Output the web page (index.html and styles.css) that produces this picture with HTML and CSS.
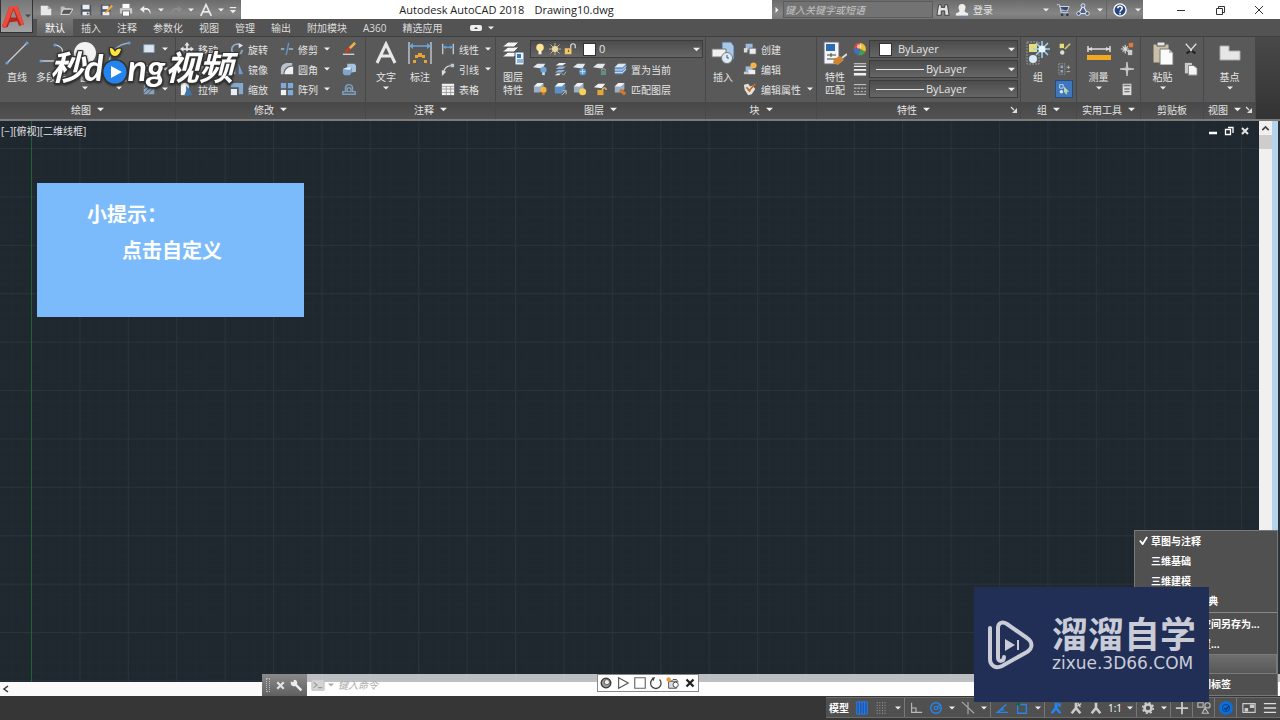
FILE: index.html
```html
<!DOCTYPE html>
<html lang="zh-CN">
<head>
  <meta charset="UTF-8" />
  <meta name="viewport" content="width=device-width, initial-scale=1.0"/>
  <title>Autodesk AutoCAD 2018 - Drawing10.dwg</title>
  <link rel="stylesheet" href="styles.css">
</head>
<body>

  <!-- icon sprite -->
  <svg class="sprite" aria-hidden="true">
    <symbol id="down" viewBox="0 0 8 8"><path d="M0 2h8L4 6z" fill="#eee"/></symbol>
    <symbol id="corner" viewBox="0 0 8 8"><path d="M1 1l3 3" stroke="#ddd" stroke-width="1.2"/><path d="M7 2v5H2z" fill="#ddd"/></symbol>
    <symbol id="new" viewBox="0 0 16 16"><path d="M2 3h8l4 4v7H2z" fill="#e8e8e8"/><path d="M10 3v4h4" fill="#aaa"/></symbol>
    <symbol id="open" viewBox="0 0 16 16"><path d="M2 13V4h4l1 2h6v2H5z" fill="#bbb"/><path d="M2 13l3-6h11l-4 6z" fill="#555" stroke="#eee"/></symbol>
    <symbol id="save" viewBox="0 0 16 16"><path d="M2 2h12v12H2z" fill="#4a5666"/><path d="M4 2h8v5H4zM4 10h8v4H4z" fill="#eee"/><path d="M9 11h2v2H9z" fill="#444"/></symbol>
    <symbol id="saveas" viewBox="0 0 16 16"><path d="M2 2h11v12H2z" fill="#4a5666"/><path d="M4 3h7v4H4zM4 10h8v4H4z" fill="#eee"/><path d="M14 2l2 2-7 7-2 1 1-3z" fill="#f0a63a"/></symbol>
    <symbol id="print" viewBox="0 0 16 16"><path d="M4 1h8v5H4z" fill="#fff"/><path d="M1 6h14v6H1z" fill="#ccc"/><path d="M4 9h8v6H4z" fill="#fff" stroke="#666"/></symbol>
    <symbol id="undo" viewBox="0 0 16 16"><path d="M6 3L1 7l5 4V8c4-1 6 1 7 5 1-5-2-8-7-7z" fill="#eee"/></symbol>
    <symbol id="redo" viewBox="0 0 16 16"><path d="M10 3l5 4-5 4V8C6 7 4 9 3 13 2 8 5 5 10 6z" fill="#8d8d8d"/></symbol>
    <symbol id="lettera" viewBox="0 0 24 24"><path d="M3 22L12 3l9 19M6 15h12" fill="none" stroke="#e8e8e8" stroke-width="3"/></symbol>
    <symbol id="more" viewBox="0 0 10 10"><path d="M1 2h8" stroke="#eee" stroke-width="1.5"/><path d="M1 5h8L5 9z" fill="#eee"/></symbol>
    <symbol id="binoculars" viewBox="0 0 16 16"><path d="M3 2h3v3h4V2h3l2 12h-5V9H6v5H1z" fill="#e4e4e4" stroke="#333"/></symbol>
    <symbol id="person" viewBox="0 0 16 16"><circle cx="8" cy="5" r="4" fill="#eee"/><path d="M5 8h6v2l4 2v3H1v-3l4-2z" fill="#eee"/><path d="M1 15h14" stroke="#4a6a92"/></symbol>
    <symbol id="cart" viewBox="0 0 16 16"><path d="M1 2h3l2 9h8M4 4h11l-2 5H5" fill="#34486c" stroke="#dfe6f2"/><circle cx="7" cy="13.500" r="1.500" fill="#26385a"/><circle cx="13" cy="13.500" r="1.500" fill="#26385a"/></symbol>
    <symbol id="a360" viewBox="0 0 16 16"><path d="M8 3L3 12h10z" fill="#4b6288" stroke="#e8edf5" stroke-width="1.300"/><circle cx="8" cy="3" r="2.200" fill="#5f7ba6" stroke="#e8edf5"/><circle cx="3" cy="12" r="2.200" fill="#3f5884" stroke="#e8edf5"/><circle cx="13" cy="12" r="2.200" fill="#3f5884" stroke="#e8edf5"/></symbol>
    <symbol id="help" viewBox="0 0 16 16"><circle cx="8" cy="8" r="7" fill="#26467e" stroke="#fff" stroke-width="1.500"/><path d="M5.500 6c0-3 5-3 5 0 0 2-2.500 2-2.500 4M8 11v2" fill="none" stroke="#fff" stroke-width="1.700"/></symbol>
    <symbol id="line" viewBox="0 0 24 24"><path d="M2 22L22 2" stroke="#c9ced3" stroke-width="1.300"/><circle cx="2" cy="22" r="1.600" fill="#62a0dc"/><circle cx="22" cy="2" r="1.600" fill="#62a0dc"/></symbol>
    <symbol id="polyline" viewBox="0 0 24 24"><path d="M2 20h14a8 8 0 0 0 0-16" fill="none" stroke="#c9ced3" stroke-width="1.300"/><circle cx="2" cy="20" r="1.600" fill="#62a0dc"/><circle cx="16" cy="4" r="1.600" fill="#62a0dc"/></symbol>
    <symbol id="circle" viewBox="0 0 24 24"><circle cx="12" cy="12" r="11" fill="#f2f2f2"/></symbol>
    <symbol id="arc" viewBox="0 0 24 24"><path d="M2 22C3 11 11 3 22 2" fill="none" stroke="#8fb2d6" stroke-width="1.500"/><circle cx="2" cy="22" r="1.600" fill="#62a0dc"/><circle cx="9" cy="8" r="1.600" fill="#62a0dc"/><circle cx="22" cy="2" r="1.600" fill="#62a0dc"/></symbol>
    <symbol id="rect" viewBox="0 0 16 16"><path d="M2 3h12v9H2z" fill="#dfe3ea" stroke="#6f9cc9"/></symbol>
    <symbol id="ellipse" viewBox="0 0 16 16"><ellipse cx="8" cy="8" rx="6" ry="4" fill="none" stroke="#ddd"/></symbol>
    <symbol id="hatch" viewBox="0 0 16 16"><path d="M2 3h12v11H2z" fill="#8aa3c0"/><path d="M2 8l5-5M2 13L12 3M6 14l8-8" stroke="#455"/></symbol>
    <symbol id="move" viewBox="0 0 16 16"><path d="M8 0l3 4H9v3h3V5l4 3-4 3V9H9v3h2l-3 4-3-4h2V9H4v2L0 8l4-3v2h3V4H5z" fill="#dfe3e8"/></symbol>
    <symbol id="rotate" viewBox="0 0 16 16"><path d="M12 4a6 6 0 1 0 2 5" fill="none" stroke="#8faac8" stroke-width="2"/><path d="M10 1l5 3-5 3z" fill="#dde"/></symbol>
    <symbol id="trim" viewBox="0 0 16 16"><path d="M10 1L7 15" stroke="#5f93c7" stroke-width="1.700"/><path d="M1 8h4M10 8h5" stroke="#9fb6cd" stroke-width="1.500"/></symbol>
    <symbol id="pencil" viewBox="0 0 16 16"><path d="M15 1L8 8" stroke="#f3b14a" stroke-width="3"/><path d="M9 7l-5 5" stroke="#b8432d" stroke-width="4"/><path d="M1 14h13" stroke="#eee" stroke-width="1.300"/></symbol>
    <symbol id="copy" viewBox="0 0 16 16"><circle cx="6" cy="6" r="4" fill="#ddd"/><circle cx="11" cy="11" r="4" fill="#8aaed2"/></symbol>
    <symbol id="mirror" viewBox="0 0 16 16"><path d="M6 2v12H1z" fill="#dce5ef"/><path d="M10 2v12h5z" fill="#6f9cc9"/></symbol>
    <symbol id="fillet" viewBox="0 0 16 16"><path d="M1 14V9c0-5 3-8 8-8h5v3C8 4 4 8 4 14z" fill="#b9c2cc"/><path d="M5 14c0-5 4-9 10-9v9z" fill="#f0f0f0"/></symbol>
    <symbol id="solid" viewBox="0 0 16 16"><path d="M1 8l5-2h5v6l-2 3H3l-2-2z" fill="#7fa5cf"/><path d="M6 2h8l2 2v7l-5 1V6H6z" fill="#a5c4e4"/><path d="M1 8l5-2h5l-2 3z" fill="#dbe8f6"/></symbol>
    <symbol id="stretch" viewBox="0 0 16 16"><path d="M1 1h9v14H1z" fill="#f4f4f4"/><path d="M7 4l5 6 2 5H5l2-5z" fill="#3c76af"/></symbol>
    <symbol id="scale" viewBox="0 0 16 16"><path d="M1 1h14v13h-5V6H1z" fill="#83a9d0"/><path d="M1 8h7v7H1z" fill="#e9eef4"/></symbol>
    <symbol id="array" viewBox="0 0 16 16"><path d="M1 1h6v6H1zM9 1h6v6H9zM9 9h6v6H9z" fill="#7fa9d6"/><path d="M1 9h6v6H1z" fill="#f2f2f2"/></symbol>
    <symbol id="offset" viewBox="0 0 16 16"><path d="M1 14v-3h3V7a4 4 0 0 1 8 0v4h3v3zM6 11V8c0-2 4-2 4 0v3z" fill="none" stroke="#7f9fc0" stroke-width="1.700"/></symbol>
    <symbol id="dim" viewBox="0 0 24 24"><path d="M1 1v22M23 1v22" stroke="#cfd2d6" stroke-width="1.300"/><path d="M2 5h20" stroke="#6ba3db" stroke-width="1.500"/><path d="M1 5l4-3v6zM23 5l-4-3v6z" fill="#6ba3db"/><path d="M7 14h3v3H7zM14 14h3v3h-3zM5 19h3v3H5zM16 19h3v3h-3zM10 12h4v4h-4z" fill="#e9a52d"/></symbol>
    <symbol id="linear" viewBox="0 0 16 16"><path d="M2 2v12M14 2v12" stroke="#ddd" stroke-width="1.300"/><path d="M2 6h12" stroke="#62a0dc" stroke-width="1.500"/><path d="M2 6l4-2v4zM14 6l-4-2v4z" fill="#62a0dc"/></symbol>
    <symbol id="leader" viewBox="0 0 16 16"><path d="M2 14c2-6 3-9 9-10" fill="none" stroke="#ddd" stroke-width="1.400"/><path d="M1 9l5 2-5 5z" fill="#ddd"/><path d="M11 2h4v4h-4z" fill="#b6c6d8"/></symbol>
    <symbol id="table" viewBox="0 0 16 16"><path d="M1 2h14v13H1z" fill="#f2f2f2"/><path d="M1 5h14M1 8h14M1 12h14M6 5v10M11 5v10" stroke="#999"/></symbol>
    <symbol id="layers" viewBox="0 0 24 24"><g fill="#f4f4f4" stroke="#555"><path d="M1 16l6-5h11l-5 5z"/><path d="M1 11l6-5h11l-5 5z"/><path d="M1 6l6-5h11l-5 5z"/></g><path d="M14 11h9v13h-9z" fill="#eef3f8" stroke="#456"/><path d="M16 13h4v4h-4z" fill="#3777bd"/><path d="M16 19h6M16 21h6" stroke="#3777bd"/></symbol>
    <symbol id="bulb" viewBox="0 0 16 16"><circle cx="8" cy="6" r="5" fill="#ffe394"/><path d="M6 10h4v5H6z" fill="#fff5d1"/></symbol>
    <symbol id="sun" viewBox="0 0 16 16"><circle cx="8" cy="8" r="4" fill="#f4dda5"/><path d="M8 0v16M0 8h16M2 2l12 12M14 2L2 14" stroke="#e6d2a2" stroke-width="1"/></symbol>
    <symbol id="unlock" viewBox="0 0 16 16"><path d="M1 7h9v8H1z" fill="#f0c469"/><path d="M9 7V4a3 3 0 0 1 6 0v3" fill="none" stroke="#ddd" stroke-width="1.600"/><path d="M6 9v3" stroke="#664" stroke-width="1.500"/></symbol>
    <symbol id="laysheet" viewBox="0 0 16 16"><path d="M0 6l5-4h9l-3 5H8z" fill="#e3e8ee"/></symbol>
    <symbol id="layoff" viewBox="0 0 16 16"><use href="#laysheet"/><circle cx="12" cy="9" r="3.500" fill="#6ba7de"/><path d="M10.500 12h3v3h-3z" fill="#cfe0f0"/></symbol>
    <symbol id="layiso" viewBox="0 0 16 16"><path d="M3 4l4-3h8l-4 3z" fill="#eef1f5"/><path d="M3 8l4-3h8l-4 3zM2 12l4-3h8l-4 3z" fill="#8db3da"/><path d="M2 15l3-2h4l-2 2z" fill="#eef1f5"/><path d="M10 13l2 2 3-4" fill="none" stroke="#bbb"/></symbol>
    <symbol id="layfrz" viewBox="0 0 16 16"><use href="#laysheet"/><circle cx="11" cy="11" r="4" fill="#5d9ad4"/><path d="M11 8v6M8 11h6" stroke="#cfe4f7"/></symbol>
    <symbol id="laylock" viewBox="0 0 16 16"><use href="#laysheet"/><path d="M9 10h6v5H9z" fill="#5f8f86"/><path d="M10 10V8h4v2" fill="none" stroke="#aaa"/></symbol>
    <symbol id="laycur" viewBox="0 0 16 16"><path d="M2 6l4-4h9v7l-4 5H2z" fill="#6b98c8"/><path d="M2 6l4-4h9l-4 4z" fill="#dbe6f1"/><path d="M2 9h9l4-4M2 12h9l4-4" fill="none" stroke="#d7e3f0"/></symbol>
    <symbol id="layon" viewBox="0 0 16 16"><path d="M1 5l4-4h7v7l-4 4H1z" fill="#9aaec4"/><path d="M1 5l4-4h7L8 5z" fill="#f2f2f2"/><circle cx="12" cy="9" r="3.500" fill="#f6b23c"/><path d="M10.500 12h3v3h-3z" fill="#c67a28"/></symbol>
    <symbol id="layuniso" viewBox="0 0 16 16"><path d="M2 5l4-4h8v7l-4 5H2z" fill="#5b8fc5"/><path d="M2 5l4-4h8l-4 4z" fill="#f2f2f2"/><path d="M10 15l5-5M15 14v-4h-4" fill="none" stroke="#ccc"/></symbol>
    <symbol id="laythaw" viewBox="0 0 16 16"><path d="M1 5l4-4h7v7l-4 4H1z" fill="#9aaec4"/><path d="M1 5l4-4h7L8 5z" fill="#f2f2f2"/><circle cx="11" cy="11" r="4" fill="#f5d05a"/></symbol>
    <symbol id="layunlock" viewBox="0 0 16 16"><path d="M1 6l5-4h8l-4 5z" fill="#f2f2f2"/><path d="M5 9h7v6H5z" fill="#e2a53a"/><path d="M11 9c0-3 4-3 4 0" fill="none" stroke="#eac06c" stroke-width="1.500"/></symbol>
    <symbol id="laymatch" viewBox="0 0 16 16"><path d="M2 5l4-4h7v7l-4 4H2z" fill="#9aaec4"/><path d="M2 5l4-4h7L9 5z" fill="#f2f2f2"/><path d="M8 9l6 5" stroke="#cc7a33" stroke-width="4"/></symbol>
    <symbol id="insert" viewBox="0 0 24 24"><path d="M11 1h9l3 4v13H11z" fill="#a9c7e6" stroke="#4c6d91"/><path d="M1 8h14v8H1z" fill="#f0f0f0" stroke="#777"/><circle cx="16" cy="17" r="5.500" fill="#dcebf8" stroke="#777"/><path d="M16 14v3h2" stroke="#555" fill="none"/></symbol>
    <symbol id="create" viewBox="0 0 16 16"><path d="M3 2h8v7H3z" fill="#9bb9d8"/><path d="M1 7h4v5H1z" fill="#ddd"/><path d="M7 7h8v7H7z" fill="#eee" stroke="#667"/></symbol>
    <symbol id="edit" viewBox="0 0 16 16"><path d="M3 5h8v6H3z" fill="#9bb9d8"/><path d="M6 9h8v5H6z" fill="#eee"/><circle cx="12" cy="4" r="3.500" fill="#f2b34b"/><path d="M1 11h5v3H1z" fill="#ccc"/></symbol>
    <symbol id="attr" viewBox="0 0 16 16"><path d="M1 3l5-1 2 3 3-1 3 4-4 6-4 1-4-6z" fill="#e5e0da"/><path d="M4 6l4 5M14 2l-7 8" stroke="#bb6b2c" stroke-width="2"/></symbol>
    <symbol id="match" viewBox="0 0 24 24"><path d="M1 1h15v22H1z" fill="#f4f4f4" stroke="#668"/><path d="M3 3h9v7H3z" fill="#2e6ab0"/><path d="M4 14h9M4 18h9M8 12v4" stroke="#444"/><path d="M24 13l-5 4" stroke="#ddd" stroke-width="2"/><path d="M11 18l6-3 4 4-6 5-5-2z" fill="#cf8430"/></symbol>
    <symbol id="wheel" viewBox="0 0 16 16"><path d="M8 8V1a7 7 0 0 1 6 10z" fill="#f0c232"/><path d="M8 8l6 3a7 7 0 0 1-8 4z" fill="#4c9a50"/><path d="M8 8l-2 7A7 7 0 0 1 1 7z" fill="#3b72c8"/><path d="M8 8L1 7a7 7 0 0 1 7-6z" fill="#d94c3c"/><circle cx="7" cy="5" r="2.500" fill="#fff" opacity=".6"/></symbol>
    <symbol id="weights" viewBox="0 0 16 16"><path d="M1 2h14" stroke="#eee"/><path d="M1 5h14" stroke="#eee" stroke-width="1.500"/><path d="M1 9h14" stroke="#eee" stroke-width="2"/><path d="M1 14h14" stroke="#eee" stroke-width="3"/></symbol>
    <symbol id="types" viewBox="0 0 16 16"><path d="M1 3h14" stroke="#ddd"/><path d="M1 7h14" stroke="#ddd" stroke-dasharray="3 1"/><path d="M1 11h14" stroke="#ddd" stroke-dasharray="2 2"/><path d="M1 14h14" stroke="#ddd"/></symbol>
    <symbol id="group" viewBox="0 0 24 24"><path d="M1 1h12v22H1z" fill="none" stroke="#999" stroke-dasharray="2 1"/><path d="M3 3h8v8H3z" fill="#e3dd7c"/><circle cx="7" cy="18" r="4" fill="#d9eaf5"/><path d="M16 0v17M7 8h17M10 2l12 12M22 2L10 14" stroke="#9fd3f7" stroke-width="1.500"/><circle cx="16" cy="8" r="3.500" fill="#e5f6ff"/></symbol>
    <symbol id="grpedit" viewBox="0 0 16 16"><path d="M3 2h5v5H3z" fill="#e3dd7c"/><circle cx="6" cy="12" r="2.500" fill="#ddd"/><path d="M15 2L9 8" stroke="#d5c56a" stroke-width="2"/></symbol>
    <symbol id="ungroup" viewBox="0 0 16 16"><path d="M2 2h7v12H2z" fill="none" stroke="#999" stroke-dasharray="2 1"/><path d="M4 4h3v3H4zM4 9h3v3H4z" fill="#8aa3c0"/><path d="M11 6h4M13 4v4M11 11h4" stroke="#bbb"/></symbol>
    <symbol id="grpsel" viewBox="0 0 16 16"><path d="M3 3h4v4H3z" fill="none" stroke="#cfe0f5"/><circle cx="5" cy="11" r="2" fill="#dbe7ef"/><path d="M8 5l6 6-3 0 1 3-2 0-1-3-1 2z" fill="#b9d8ae"/></symbol>
    <symbol id="measure" viewBox="0 0 24 24"><path d="M1 5v6M23 5v6M1 8h22" stroke="#ddd" stroke-width="1.500"/><path d="M1 8l4-2v4zM23 8l-4-2v4z" fill="#ddd"/><path d="M0 14h24v5H0z" fill="#f2a922"/></symbol>
    <symbol id="qselect" viewBox="0 0 16 16"><path d="M6 3v10M1 8h9M3 5l6 6M9 5l-6 6" stroke="#ddd" stroke-width="1.300"/><path d="M10 1h5v5h-5z" fill="#e5793a"/><path d="M9 9h5v6H9z" fill="#ccc"/></symbol>
    <symbol id="point" viewBox="0 0 16 16"><path d="M8 0l1 7 7 1-7 1-1 7-1-7-7-1 7-1z" fill="#ccc" stroke="#ccc"/></symbol>
    <symbol id="calc" viewBox="0 0 16 16"><path d="M3 2h10v13H3z" fill="#ddd"/><path d="M4 4h8M5 8h6M5 11h6" stroke="#777" stroke-width="1.500"/></symbol>
    <symbol id="paste" viewBox="0 0 24 24"><path d="M2 3h16v19H2z" fill="#c8bfa8" stroke="#5d584e"/><path d="M6 1h8v4H6z" fill="#e8e8e8" stroke="#555"/><path d="M9 8h9l4 4v12H9z" fill="#fafafa" stroke="#777"/><path d="M18 8v4h4" fill="#bbb"/></symbol>
    <symbol id="cut" viewBox="0 0 16 16"><path d="M2 2l8 9M14 2L6 11" stroke="#ddd" stroke-width="1.500"/><path d="M3 13l4-3M13 13L9 10" stroke="#222" stroke-width="2.500"/></symbol>
    <symbol id="clip" viewBox="0 0 16 16"><path d="M1 1h8v12H1z" fill="#ccc"/><path d="M5 4h6l4 3v8H5z" fill="#f5f5f5" stroke="#777"/></symbol>
    <symbol id="base" viewBox="0 0 24 24"><path d="M2 5h9v5h11v9H2z" fill="#e6e6e6" stroke="#aaa"/></symbol>
    <symbol id="minimize" viewBox="0 0 12 12"><path d="M2 6.500h8" stroke="currentColor"/></symbol>
    <symbol id="restore" viewBox="0 0 12 12"><path d="M2.500 4.500h6v6h-6zM4.500 4V2.500h6v6H9" fill="none" stroke="currentColor"/></symbol>
    <symbol id="close" viewBox="0 0 12 12"><path d="M2 2l8 8M10 2l-8 8" stroke="currentColor"/></symbol>
    <symbol id="vpmin" viewBox="0 0 12 12"><path d="M2 8h8" stroke="#fff" stroke-width="2.500"/></symbol>
    <symbol id="vprestore" viewBox="0 0 12 12"><path d="M2.500 4.500h5v5h-5zM5 2.500h5V8" fill="none" stroke="#fff" stroke-width="1.300"/></symbol>
    <symbol id="boldclose" viewBox="0 0 12 12"><path d="M3 3l6 6M9 3l-6 6" stroke="currentColor" stroke-width="2"/></symbol>
    <symbol id="wrench" viewBox="0 0 16 16"><path d="M6 6l8 8" stroke="#eee" stroke-width="3"/><path d="M1 3l3 1 1-3a4 4 0 1 1-4 5z" fill="#eee"/></symbol>
    <symbol id="prompt" viewBox="0 0 16 16"><path d="M1 2h14v12H1z" fill="#d5d5d5" stroke="#bbb"/><path d="M3 5l4 3-4 3M8 11h5" fill="none" stroke="#999" stroke-width="1.300"/></symbol>
    <symbol id="ball" viewBox="0 0 16 16"><circle cx="8" cy="8" r="5.500" fill="#999" stroke="#333" stroke-width="1.500"/><circle cx="9" cy="7" r="3" fill="#eee" stroke="#555"/></symbol>
    <symbol id="play" viewBox="0 0 16 16"><path d="M3 2l11 6-11 6z" fill="none" stroke="#555" stroke-width="1.300"/></symbol>
    <symbol id="stop" viewBox="0 0 16 16"><path d="M2 2h12v12H2z" fill="#fff" stroke="#666" stroke-width="1.300"/></symbol>
    <symbol id="loop" viewBox="0 0 16 16"><path d="M5 3a6 6 0 1 0 7 1" fill="none" stroke="#444" stroke-width="1.500"/><path d="M7 1L3 2l2 4" fill="#444"/></symbol>
    <symbol id="camera" viewBox="0 0 16 16"><path d="M3 6h9v8H3z" fill="#ddd" stroke="#444"/><circle cx="11" cy="10" r="3" fill="#fff" stroke="#333"/><circle cx="3" cy="4" r="2.500" fill="#f29a3a"/><path d="M6 6l2-2h4l2 3" fill="none" stroke="#444"/></symbol>
    <symbol id="sgrid" viewBox="0 0 16 16"><path d="M2 1h12v14H2zM5 1v14M8 1v14M11 1v14" fill="#1d5ab0" stroke="#2f7fe6"/></symbol>
    <symbol id="sdots" viewBox="0 0 16 16"><path d="M2 2h12M2 5h12M2 8h12M2 11h12M2 14h12" stroke="#bbb" stroke-dasharray="1 2"/></symbol>
    <symbol id="ortho" viewBox="0 0 16 16"><path d="M3 2v11h12M3 8h5v5" fill="none" stroke="#bbb" stroke-width="1.300"/></symbol>
    <symbol id="polar" viewBox="0 0 16 16"><circle cx="8" cy="8" r="6" fill="none" stroke="#2386f3" stroke-width="1.600"/><circle cx="8" cy="8" r="2" fill="none" stroke="#2386f3" stroke-width="1.300"/><path d="M9 7l4-3M9 8h5" stroke="#2386f3" stroke-width="1.300"/></symbol>
    <symbol id="iso" viewBox="0 0 16 16"><path d="M1 1l14 13M8 1v14" stroke="#aaa" stroke-width="1.300"/></symbol>
    <symbol id="angle" viewBox="0 0 16 16"><path d="M13 4L3 13h12M6 10h4" fill="none" stroke="#2386f3" stroke-width="1.700"/></symbol>
    <symbol id="osnap" viewBox="0 0 16 16"><path d="M3 4h10v10H3z" fill="none" stroke="#2386f3" stroke-width="1.500"/><path d="M2 2h4v3H2z" fill="#0c6244"/></symbol>
    <symbol id="anno" viewBox="0 0 16 16"><path d="M8 2v6M8 8l-5 6M8 8l5 6" stroke="currentColor" stroke-width="3"/></symbol>
    <symbol id="annoplus" viewBox="0 0 16 16"><path d="M8 2v6M8 8l-5 6M8 8l5 6" stroke="currentColor" stroke-width="3"/><path d="M9 6l5-3M10 2l3 5" stroke="currentColor" stroke-width="1.500"/></symbol>
    <symbol id="gear" viewBox="0 0 16 16"><circle cx="8" cy="8" r="4" fill="none" stroke="#ccc" stroke-width="3"/><circle cx="8" cy="8" r="6" fill="none" stroke="#ccc" stroke-width="2" stroke-dasharray="2.400 2.300"/></symbol>
    <symbol id="plus" viewBox="0 0 16 16"><path d="M8 1v14M1 8h14" stroke="#ccc" stroke-width="2"/></symbol>
    <symbol id="shapes" viewBox="0 0 16 16"><path d="M1 2h6v5H1zM6 14l3-6 4 6z" fill="none" stroke="#bbb" stroke-width="1.300"/><circle cx="12" cy="5" r="3" fill="none" stroke="#bbb" stroke-width="1.300"/></symbol>
    <symbol id="hw" viewBox="0 0 16 16"><circle cx="8" cy="8" r="8" fill="#0c6ed6"/><circle cx="8" cy="8" r="4" fill="none" stroke="#094b97" stroke-width="1.300"/><path d="M6 8l2 2 3-4" fill="none" stroke="#08397a" stroke-width="1.500"/></symbol>
    <symbol id="clean" viewBox="0 0 16 16"><path d="M1 3h14v10H1z" fill="none" stroke="#ccc" stroke-width="1.300"/><path d="M9 4h5v4H9zM3 8h4v4H3z" fill="#ccc"/></symbol>
    <symbol id="menu" viewBox="0 0 16 16"><path d="M1 3h14M1 8h14M1 13h14" stroke="#ddd" stroke-width="1.700"/></symbol>
  </svg>

  <div class="app">
    <div class="top">
      <button class="app-button" aria-label="应用程序菜单">
        <svg class="app-logo" viewBox="0 0 24 24"><path d="M0 22L8 1h8l7 19-5 2-2-5-8 1-2 5-4 1z" fill="#b9241c"/><path d="M8 1h8l7 19-3 1L12 3 5 21l-2 3-3-2z" fill="#ea4d3e"/><path d="M9 13l3-8 3 8z" fill="#8d8d8d"/></svg>
        <svg class="arrow dark"><use href="#down"/></svg>
      </button>

      <div class="titlebar">
        <div class="quick-access">
          <button aria-label="新建"><svg><use href="#new"/></svg></button>
          <button aria-label="打开"><svg><use href="#open"/></svg></button>
          <button aria-label="保存"><svg><use href="#save"/></svg></button>
          <button aria-label="另存为"><svg><use href="#saveas"/></svg></button>
          <button aria-label="打印"><svg><use href="#print"/></svg></button>
          <button aria-label="放弃"><svg><use href="#undo"/></svg></button>
          <button class="slim" aria-label="放弃列表"><svg class="arrow"><use href="#down"/></svg></button>
          <button aria-label="重做"><svg><use href="#redo"/></svg></button>
          <button class="slim" aria-label="重做列表"><svg class="arrow"><use href="#down"/></svg></button>
          <button aria-label="文字"><svg><use href="#lettera"/></svg></button>
          <button class="slim" aria-label="文字列表"><svg class="arrow"><use href="#down"/></svg></button>
          <button class="slim" aria-label="自定义快速访问工具栏"><svg class="tiny"><use href="#more"/></svg></button>
        </div>
        <h1 class="title"><span>Autodesk AutoCAD 2018</span><span>Drawing10.dwg</span></h1>
        <div class="infocenter">
          <button class="slim" aria-label="展开"><svg class="arrow right"><use href="#down"/></svg></button>
          <input class="search" type="text" placeholder="键入关键字或短语" aria-label="搜索">
          <button aria-label="查找"><svg><use href="#binoculars"/></svg></button>
          <button class="sign-in"><svg><use href="#person"/></svg><span>登录</span><svg class="arrow"><use href="#down"/></svg></button>
          <button aria-label="应用商店"><svg><use href="#cart"/></svg></button>
          <button aria-label="A360"><svg><use href="#a360"/></svg></button>
          <button class="slim divided" aria-label="A360 列表"><svg class="arrow"><use href="#down"/></svg></button>
          <button class="help" aria-label="帮助"><svg><use href="#help"/></svg></button>
          <button class="slim" aria-label="帮助列表"><svg class="arrow"><use href="#down"/></svg></button>
        </div>
        <div class="window-buttons">
          <button aria-label="最小化"><svg><use href="#minimize"/></svg></button>
          <button aria-label="还原"><svg><use href="#restore"/></svg></button>
          <button aria-label="关闭"><svg><use href="#close"/></svg></button>
        </div>
      </div>

      <nav class="tabs">
        <button class="active">默认</button>
        <button>插入</button>
        <button>注释</button>
        <button>参数化</button>
        <button>视图</button>
        <button>管理</button>
        <button>输出</button>
        <button>附加模块</button>
        <button>A360</button>
        <button>精选应用</button>
        <button class="tab-toggle" aria-label="最小化功能区"><svg viewBox="0 0 12 8"><rect y="1" width="12" height="6" rx="2" fill="#eee"/><path d="M4 5h4L6 3z" fill="#444"/></svg><svg class="arrow"><use href="#down"/></svg></button>
      </nav>
    </div>

    <div class="ribbon">
      <section class="panel draw">
        <div class="panel-body">
          <button class="big"><svg><use href="#line"/></svg><span>直线</span></button>
          <button class="big"><svg><use href="#polyline"/></svg><span>多段线</span></button>
          <button class="big"><svg><use href="#circle"/></svg><span>圆</span><svg class="arrow"><use href="#down"/></svg></button>
          <button class="big"><svg><use href="#arc"/></svg><span>圆弧</span><svg class="arrow"><use href="#down"/></svg></button>
          <div class="small-grid">
            <button class="small" aria-label="矩形"><svg><use href="#rect"/></svg><svg class="arrow"><use href="#down"/></svg></button>
            <button class="small" aria-label="椭圆"><svg><use href="#ellipse"/></svg><svg class="arrow"><use href="#down"/></svg></button>
            <button class="small" aria-label="图案填充"><svg><use href="#hatch"/></svg><svg class="arrow"><use href="#down"/></svg></button>
          </div>
        </div>
        <h2>绘图 <svg class="arrow"><use href="#down"/></svg></h2>
      </section>

      <section class="panel modify">
        <div class="panel-body">
          <div class="small-grid">
            <button class="small"><svg><use href="#move"/></svg>移动</button>
            <button class="small"><svg><use href="#rotate"/></svg>旋转</button>
            <button class="small"><svg><use href="#trim"/></svg>修剪<svg class="arrow"><use href="#down"/></svg></button>
            <button class="small" aria-label="删除"><svg><use href="#pencil"/></svg></button>
            <button class="small"><svg><use href="#copy"/></svg>复制</button>
            <button class="small"><svg><use href="#mirror"/></svg>镜像</button>
            <button class="small"><svg><use href="#fillet"/></svg>圆角<svg class="arrow"><use href="#down"/></svg></button>
            <button class="small" aria-label="分解"><svg><use href="#solid"/></svg></button>
            <button class="small"><svg><use href="#stretch"/></svg>拉伸</button>
            <button class="small"><svg><use href="#scale"/></svg>缩放</button>
            <button class="small"><svg><use href="#array"/></svg>阵列<svg class="arrow"><use href="#down"/></svg></button>
            <button class="small" aria-label="偏移"><svg><use href="#offset"/></svg></button>
          </div>
        </div>
        <h2>修改 <svg class="arrow"><use href="#down"/></svg></h2>
      </section>

      <section class="panel annotate">
        <div class="panel-body">
          <button class="big"><svg><use href="#lettera"/></svg><span>文字</span><svg class="arrow"><use href="#down"/></svg></button>
          <button class="big"><svg><use href="#dim"/></svg><span>标注</span></button>
          <div class="small-grid">
            <button class="small"><svg><use href="#linear"/></svg>线性<svg class="arrow"><use href="#down"/></svg></button>
            <button class="small"><svg><use href="#leader"/></svg>引线<svg class="arrow"><use href="#down"/></svg></button>
            <button class="small"><svg><use href="#table"/></svg>表格</button>
          </div>
        </div>
        <h2>注释 <svg class="arrow"><use href="#down"/></svg></h2>
      </section>

      <section class="panel layer">
        <div class="panel-body">
          <button class="big"><svg><use href="#layers"/></svg><span>图层<br>特性</span></button>
          <div class="rows">
            <div class="combo">
              <svg><use href="#bulb"/></svg><svg><use href="#sun"/></svg><svg><use href="#unlock"/></svg><span class="swatch"></span>
              <select aria-label="图层"><option>0</option></select>
              <svg class="arrow"><use href="#down"/></svg>
            </div>
            <div class="tool-row">
              <button aria-label="关"><svg><use href="#layoff"/></svg></button>
              <button aria-label="隔离"><svg><use href="#layiso"/></svg></button>
              <button aria-label="冻结"><svg><use href="#layfrz"/></svg></button>
              <button aria-label="锁定"><svg><use href="#laylock"/></svg></button>
              <button class="small"><svg><use href="#laycur"/></svg>置为当前</button>
            </div>
            <div class="tool-row">
              <button aria-label="打开所有图层"><svg><use href="#layon"/></svg></button>
              <button aria-label="取消隔离"><svg><use href="#layuniso"/></svg></button>
              <button aria-label="解冻所有图层"><svg><use href="#laythaw"/></svg></button>
              <button aria-label="解锁"><svg><use href="#layunlock"/></svg></button>
              <button class="small"><svg><use href="#laymatch"/></svg>匹配图层</button>
            </div>
          </div>
        </div>
        <h2>图层 <svg class="arrow"><use href="#down"/></svg></h2>
      </section>

      <section class="panel block">
        <div class="panel-body">
          <button class="big"><svg><use href="#insert"/></svg><span>插入</span></button>
          <div class="small-grid">
            <button class="small"><svg><use href="#create"/></svg>创建</button>
            <button class="small"><svg><use href="#edit"/></svg>编辑</button>
            <button class="small"><svg><use href="#attr"/></svg>编辑属性<svg class="arrow"><use href="#down"/></svg></button>
          </div>
        </div>
        <h2>块 <svg class="arrow"><use href="#down"/></svg></h2>
      </section>

      <section class="panel properties">
        <div class="panel-body">
          <button class="big"><svg><use href="#match"/></svg><span>特性<br>匹配</span></button>
          <div class="rows">
            <div class="prop"><svg><use href="#wheel"/></svg><div class="combo"><span class="swatch"></span><select aria-label="颜色"><option>ByLayer</option></select><svg class="arrow"><use href="#down"/></svg></div></div>
            <div class="prop"><svg><use href="#weights"/></svg><div class="combo"><span class="stroke"></span><select aria-label="线宽"><option>ByLayer</option></select><svg class="arrow"><use href="#down"/></svg></div></div>
            <div class="prop"><svg><use href="#types"/></svg><div class="combo"><span class="stroke"></span><select aria-label="线型"><option>ByLayer</option></select><svg class="arrow"><use href="#down"/></svg></div></div>
          </div>
        </div>
        <h2>特性 <svg class="arrow"><use href="#down"/></svg><svg class="launcher"><use href="#corner"/></svg></h2>
      </section>

      <section class="panel group">
        <div class="panel-body">
          <button class="big"><svg><use href="#group"/></svg><span>组</span></button>
          <div class="small-grid">
            <button class="small" aria-label="组编辑"><svg><use href="#grpedit"/></svg></button>
            <button class="small" aria-label="解除编组"><svg><use href="#ungroup"/></svg></button>
            <button class="small pressed" aria-label="启用组选择"><svg><use href="#grpsel"/></svg></button>
          </div>
        </div>
        <h2>组 <svg class="arrow"><use href="#down"/></svg></h2>
      </section>

      <section class="panel utilities">
        <div class="panel-body">
          <button class="big"><svg><use href="#measure"/></svg><span>测量</span><svg class="arrow"><use href="#down"/></svg></button>
          <div class="small-grid">
            <button class="small" aria-label="快速选择"><svg><use href="#qselect"/></svg></button>
            <button class="small" aria-label="点"><svg><use href="#point"/></svg></button>
            <button class="small" aria-label="计算器"><svg><use href="#calc"/></svg></button>
          </div>
        </div>
        <h2>实用工具 <svg class="arrow"><use href="#down"/></svg></h2>
      </section>

      <section class="panel clipboard">
        <div class="panel-body">
          <button class="big"><svg><use href="#paste"/></svg><span>粘贴</span><svg class="arrow"><use href="#down"/></svg></button>
          <div class="small-grid">
            <button class="small" aria-label="剪切"><svg><use href="#cut"/></svg></button>
            <button class="small" aria-label="复制剪裁"><svg><use href="#clip"/></svg></button>
          </div>
        </div>
        <h2>剪贴板</h2>
      </section>

      <section class="panel view">
        <div class="panel-body">
          <button class="big"><svg><use href="#base"/></svg><span>基点</span><svg class="arrow"><use href="#down"/></svg></button>
        </div>
        <h2>视图 <svg class="arrow"><use href="#down"/></svg><svg class="launcher"><use href="#corner"/></svg></h2>
      </section>
    </div>

    <main class="workspace">
      <div class="canvas">
        <svg class="grid-lines" width="100%" height="100%">
          <defs>
            <pattern id="minor" width="9.700" height="9.700" patternUnits="userSpaceOnUse" x="31" y="27"><path d="M0 .5h9.700M.5 0v9.700" stroke="#212a32"/></pattern>
            <pattern id="major" width="48.400" height="48.400" patternUnits="userSpaceOnUse" x="31" y="27"><path d="M0 .5h48.400M.5 0v48.400" stroke="#29333b"/></pattern>
          </defs>
          <rect width="100%" height="100%" fill="url(#minor)"/>
          <rect width="100%" height="100%" fill="url(#major)"/>
          <path d="M31.500 0v2000" stroke="#1c6433"/>
        </svg>
        <div class="viewport-bar">
          <span>[−][俯视][二维线框]</span>
          <div class="viewport-buttons">
            <button aria-label="最小化视口"><svg><use href="#vpmin"/></svg></button>
            <button aria-label="还原视口"><svg><use href="#vprestore"/></svg></button>
            <button aria-label="关闭视口"><svg><use href="#boldclose"/></svg></button>
          </div>
        </div>

        <div class="tip">
          <p>小提示：</p>
          <p class="tip-text">点击自定义</p>
        </div>
      </div>
      <div class="vscroll">
        <svg viewBox="0 0 12 12"><path d="M3 8l3-3 3 3" fill="none" stroke="#444" stroke-width="1.500"/></svg>
        <div class="thumb"></div>
      </div>
    </main>

    <div class="hscroll">
      <svg viewBox="0 0 12 12"><path d="M8 3L4 6l4 3" fill="none" stroke="#333" stroke-width="1.500"/></svg>
      <div class="command-line">
        <div class="command-handle">
          <span class="grip"></span>
          <button aria-label="关闭命令行"><svg><use href="#boldclose"/></svg></button>
          <button aria-label="自定义命令行"><svg><use href="#wrench"/></svg></button>
        </div>
        <svg class="prompt"><use href="#prompt"/></svg><svg class="arrow"><use href="#down"/></svg>
        <input type="text" placeholder="键入命令" aria-label="命令">
      </div>
      <div class="recorder">
        <button aria-label="录制"><svg><use href="#ball"/></svg></button>
        <button aria-label="播放"><svg><use href="#play"/></svg></button>
        <button aria-label="停止"><svg><use href="#stop"/></svg></button>
        <button aria-label="重复"><svg><use href="#loop"/></svg></button>
        <button aria-label="捕捉"><svg><use href="#camera"/></svg></button>
        <button aria-label="关闭工具栏"><svg><use href="#boldclose"/></svg></button>
      </div>
    </div>

    <footer class="statusbar">
      <div class="status-tools">
        <button class="model">模型</button>
        <button aria-label="栅格"><svg><use href="#sgrid"/></svg></button>
        <button aria-label="捕捉模式"><svg><use href="#sdots"/></svg></button>
        <button class="drop" aria-label="捕捉设置"><svg class="arrow"><use href="#down"/></svg></button>
        <button class="first" aria-label="正交"><svg><use href="#ortho"/></svg></button>
        <button aria-label="极轴"><svg><use href="#polar"/></svg></button>
        <button class="drop" aria-label="极轴设置"><svg class="arrow"><use href="#down"/></svg></button>
        <button aria-label="等轴测"><svg><use href="#iso"/></svg></button>
        <button class="drop" aria-label="等轴测设置"><svg class="arrow"><use href="#down"/></svg></button>
        <button class="first" aria-label="对象捕捉追踪"><svg><use href="#angle"/></svg></button>
        <button aria-label="对象捕捉"><svg><use href="#osnap"/></svg></button>
        <button class="drop" aria-label="对象捕捉设置"><svg class="arrow"><use href="#down"/></svg></button>
        <button class="first on" aria-label="注释可见性"><svg><use href="#annoplus"/></svg></button>
        <button aria-label="自动缩放"><svg><use href="#annoplus"/></svg></button>
        <button aria-label="注释比例"><svg><use href="#anno"/></svg></button>
        <button class="ratio">1:1</button>
        <button class="drop" aria-label="比例列表"><svg class="arrow"><use href="#down"/></svg></button>
        <button class="first" aria-label="切换工作空间"><svg><use href="#gear"/></svg></button>
        <button class="drop" aria-label="工作空间列表"><svg class="arrow"><use href="#down"/></svg></button>
        <button class="first" aria-label="注释监视器"><svg><use href="#plus"/></svg></button>
        <button class="first" aria-label="隔离对象"><svg><use href="#shapes"/></svg></button>
        <button class="first" aria-label="硬件加速"><svg><use href="#hw"/></svg></button>
        <button class="first last" aria-label="全屏显示"><svg><use href="#clean"/></svg></button>
        <button aria-label="自定义"><svg><use href="#menu"/></svg></button>
      </div>
    </footer>

    <div class="workspace-menu" role="menu">
      <button role="menuitem"><svg class="check" viewBox="0 0 10 10"><path d="M1 5l3 4 5-8" fill="none" stroke="#fff" stroke-width="2"/></svg>草图与注释</button>
      <button role="menuitem">三维基础</button>
      <button role="menuitem">三维建模</button>
      <button role="menuitem">AutoCAD 经典</button>
      <hr>
      <button role="menuitem">将当前工作空间另存为...</button>
      <button role="menuitem">工作空间设置...</button>
      <button class="hover" role="menuitem">自定义...</button>
      <button role="menuitem">显示工作空间标签</button>
    </div>

    <div class="video-brand">
      <span class="cjk">秒</span><span class="latin">d</span>
      <svg viewBox="0 0 24 38"><path d="M7 0c3 0 4 2 5 4 1-2 3-4 6-3-1 4-3 7-6 7-4 0-5-4-5-8z" fill="#ffe43d"/><circle cx="12" cy="24" r="11.500" fill="#2583ee"/><path d="M8 18l11 6-11 6z" fill="#fff"/></svg>
      <span class="latin">ng</span><span class="cjk">视频</span>
    </div>

    <div class="site-brand">
      <svg viewBox="0 0 48 50"><path d="M3 8v31c0 7 6 10 12 7l25-14c6-4 6-10 0-14L20 4c-5-3-9-1-9 4v30c0 4 6 4 6-1" fill="none" stroke="#c9ccd6" stroke-width="4" stroke-linecap="round"/><path d="M18 19l10 6-10 6z" fill="#c9ccd6"/><path d="M31 20v10" stroke="#c9ccd6" stroke-width="2"/></svg>
      <div>
        <p class="site-name">溜溜自学</p>
        <p class="site-url">zixue.3D66.COM</p>
      </div>
    </div>
  </div>

</body>
</html>
```

FILE: styles.css
```css
* {
  box-sizing: border-box;
}

body {
  margin: 0;
  font-family: "Open Sans", "Noto Sans CJK SC", sans-serif;
  font-size: 10px;
  color: #e4e4e4;
  background: #363636;
}

button,
input,
select {
  font: inherit;
  color: inherit;
  background: none;
  border: 0;
  padding: 0;
  margin: 0;
  min-width: 0;
}

button {
  display: flex;
  align-items: center;
  justify-content: center;
  white-space: nowrap;
}

h1, h2, p {
  margin: 0;
}

h1, h2 {
  font-weight: normal;
}

svg {
  display: block;
  flex: none;
  width: 14px;
  height: 14px;
}

.sprite {
  position: absolute;
  width: 0;
  height: 0;
}

.arrow {
  width: 6px;
  height: 6px;
}

.arrow.right {
  transform: rotate(-90deg);
}

.arrow.dark {
  filter: brightness(0.3);
}

.tiny {
  width: 8px;
  height: 8px;
}

.app {
  position: relative;
  display: flex;
  flex-direction: column;
  height: 100vh;
  overflow: hidden;
}

/* title bar and tabs */
.top {
  display: grid;
  grid-template-columns: 33px 1fr;
  grid-template-rows: 19px 17px;
  background: #535353;
}

.app-button {
  grid-row: 1 / 3;
  margin-bottom: 3px;
  background: linear-gradient(#777, #a2a2a2);
  border: 1px solid #333;
  border-top: 0;
}

.app-logo {
  width: 23px;
  height: 25px;
}

.titlebar {
  display: flex;
  background: #fff;
}

.quick-access,
.infocenter {
  display: flex;
  align-items: stretch;
  background: linear-gradient(#6b6b6b, #858585 70%, #777);
}

.quick-access {
  width: 208px;
  padding-left: 3px;
}

.quick-access button,
.infocenter button {
  width: 20px;
}

.quick-access .slim,
.infocenter .slim {
  width: 10px;
}

.quick-access .slim:last-child {
  width: 14px;
}

.title {
  flex: 1;
  display: flex;
  justify-content: center;
  gap: 10px;
  font-size: 11px;
  line-height: 19px;
  color: #222;
}

.infocenter {
  width: 371px;
}

.search {
  width: 150px;
  margin: 1px 0 1px 1px;
  padding: 0 1px;
  background: #737373;
  border: 1px solid #5c5c5c;
  font-style: italic;
}

.search::placeholder {
  color: #c4c4c4;
  opacity: 1;
}

.infocenter .sign-in {
  flex: 1;
  justify-content: flex-start;
  gap: 4px;
  padding-left: 2px;
}

.sign-in .arrow {
  margin-left: auto;
  margin-right: 4px;
}

.infocenter .divided {
  width: 14px;
  border-right: 1px solid #666;
}

.infocenter .help {
  width: 26px;
}

.window-buttons {
  display: flex;
  width: 137px;
  padding-left: 18px;
  color: #333;
}

.window-buttons button {
  width: 39px;
}

.window-buttons svg {
  width: 12px;
  height: 12px;
}

.tabs {
  display: flex;
  padding-left: 4px;
}

.tabs button {
  padding: 0 8px;
  line-height: 16px;
  color: #ddd;
}

.tabs .active {
  background: linear-gradient(#757575, #616161);
  color: #fff;
}

.tabs .tab-toggle {
  gap: 6px;
  margin-left: 12px;
}

.tab-toggle svg:first-child {
  width: 12px;
  height: 8px;
}

/* ribbon */
.ribbon {
  display: flex;
  height: 85px;
  background: linear-gradient(#494949, #333);
  border-top: 1px solid #404040;
  border-bottom: 2px solid #7c7c7c;
}

.panel {
  display: flex;
  flex-direction: column;
  background: #595959;
  border-right: 1px solid #484848;
}

.panel h2 {
  position: relative;
  display: flex;
  align-items: center;
  justify-content: center;
  gap: 6px;
  height: 17px;
  padding-bottom: 2px;
  font-size: 10px;
  background: linear-gradient(#484848, #525252);
}

.panel h2 .arrow {
  width: 7px;
  height: 7px;
}

.panel h2 .launcher {
  position: absolute;
  right: 2px;
  width: 8px;
  height: 8px;
}

.properties h2,
.view h2 {
  padding-right: 10px;
}

.panel-body {
  flex: 1;
  display: flex;
  padding-top: 2px;
}

.draw { width: 176px; }
.modify { width: 190px; }
.annotate { width: 130px; }
.layer { width: 210px; }
.block { width: 111px; }
.properties { width: 204px; }
.group { width: 56px; }
.utilities { width: 64px; }
.clipboard { width: 63px; }
.view { width: 52px; }

.big {
  flex-direction: column;
  justify-content: flex-start;
  width: 34px;
  padding-top: 2px;
  line-height: 13px;
}

.big svg {
  width: 24px;
  height: 24px;
}

.big span {
  margin-top: 6px;
}

.big .arrow {
  width: 6px;
  height: 6px;
  margin-top: 1px;
}

.small-grid {
  display: grid;
  grid-template-rows: repeat(3, 20px);
  align-content: start;
  justify-content: start;
}

.small {
  justify-content: flex-start;
  gap: 4px;
}

.small .arrow {
  margin-left: 2px;
}

.draw .big {
  width: 34px;
}

.draw .small-grid {
  padding-left: 6px;
}

.modify .small-grid {
  grid-template-columns: 50px 50px 62px 14px;
  padding-left: 4px;
}

.annotate .panel-body {
  padding-left: 3px;
}

.annotate .big {
  width: 34px;
}

.annotate .small-grid {
  padding-left: 4px;
}

.block .small-grid {
  padding-left: 3px;
}

.rows {
  flex: 1;
  display: grid;
  grid-template-rows: repeat(3, 20px);
  padding-right: 2px;
}

.combo {
  flex: 1;
  display: flex;
  align-items: center;
  gap: 3px;
  height: 18px;
  margin: 1px 0;
  padding: 0 2px 0 3px;
  background: linear-gradient(#4c4c4c, #666);
  border: 1px solid #3c3c3c;
}

.combo select {
  flex: 1;
  appearance: none;
  font-size: 11px;
  line-height: 14px;
}

.combo svg {
  width: 12px;
  height: 12px;
}

.combo .arrow {
  width: 7px;
  height: 7px;
}

.swatch {
  width: 13px;
  height: 13px;
  background: #fff;
  border: 1px solid #333;
}

.layer .swatch {
  margin-left: 4px;
}

.properties .swatch {
  margin: 0 4px 0 6px;
}

.stroke {
  width: 48px;
  height: 1px;
  margin-left: 3px;
  background: #e4e4e4;
}

.properties .combo {
  gap: 2px;
}

.tool-row {
  display: flex;
  gap: 6px;
  padding-left: 3px;
}

.properties .big {
  width: 36px;
}

.prop {
  display: flex;
  align-items: center;
  gap: 2px;
}

.group .small {
  justify-content: center;
  width: 18px;
}

.group .pressed {
  height: 18px;
  margin-top: 1px;
  background: #3f76bd;
  border: 1px solid #274d80;
}

.utilities .big,
.clipboard .big {
  width: 43px;
}

.view .big {
  width: 51px;
}

/* drawing area */
.workspace {
  flex: 1;
  display: flex;
  min-height: 0;
}

.canvas {
  position: relative;
  flex: 1;
  background: #1f272f;
}

.grid-lines {
  position: absolute;
  inset: 0;
  width: 100%;
  height: 100%;
}

.viewport-bar {
  position: relative;
  display: flex;
  justify-content: space-between;
  padding: 3px 8px 0 1px;
  line-height: 14px;
}

.viewport-buttons {
  display: flex;
  gap: 4px;
}

.viewport-buttons svg {
  width: 12px;
  height: 12px;
}

.tip {
  position: absolute;
  left: 37px;
  top: 62px;
  width: 267px;
  height: 134px;
  padding: 14px 50px;
  background: #7cbbfb;
  color: #fff;
  font-size: 20px;
  font-weight: bold;
  line-height: 36px;
}

.tip-text {
  padding-left: 35px;
}

.vscroll {
  width: 21px;
  background: #f0f0f0;
  border-right: 2px solid #2b3238;
  box-shadow: inset -6px 0 #b4d4ee;
}

.vscroll svg {
  width: 13px;
}

.thumb {
  width: 13px;
  height: 14px;
  background: #cdcdcd;
}

.hscroll {
  position: relative;
  display: flex;
  align-items: center;
  height: 14px;
  background: #fafafa;
}

.hscroll > svg {
  width: 12px;
  height: 12px;
}

.command-line {
  position: absolute;
  left: 262px;
  right: 0;
  bottom: 0;
  display: flex;
  align-items: center;
  gap: 3px;
  height: 22px;
  background: rgba(255, 255, 255, 0.7);
}

.command-handle {
  display: flex;
  align-items: center;
  gap: 4px;
  width: 45px;
  height: 22px;
  padding: 0 4px;
  margin-right: 1px;
  background: linear-gradient(#8a8a8a, #606060);
}

.command-handle svg {
  width: 13px;
  height: 13px;
}

.grip {
  width: 4px;
  height: 14px;
  border: 1px dotted #bbb;
}

.command-line .arrow {
  filter: brightness(0.7);
}

.command-line input {
  flex: 1;
  padding-left: 1px;
  font-style: italic;
  color: #555;
}

.command-line input::placeholder {
  color: #aaa;
  opacity: 1;
}

.recorder {
  position: absolute;
  left: 597px;
  bottom: 4px;
  display: flex;
  align-items: center;
  justify-content: space-around;
  width: 102px;
  height: 18px;
  background: #fff;
  border: 1px solid #888;
  color: #222;
}

/* status bar */
.statusbar {
  display: flex;
  justify-content: flex-end;
  height: 24px;
  padding: 1px 0 2px;
  background: #363636;
}

.status-tools {
  display: flex;
  background: #505050;
  border-top: 1px solid #6c6c6c;
  border-bottom: 1px solid #6c6c6c;
  color: #ccc;
}

.status-tools button {
  width: 20px;
}

.status-tools .drop {
  width: 12px;
}

.status-tools .first {
  width: 22px;
  border-left: 1px solid #777;
}

.status-tools .model {
  width: 26px;
  color: #fff;
  font-weight: bold;
}

.status-tools .ratio {
  width: 18px;
  color: #fff;
}

.status-tools .last {
  width: 24px;
}

.status-tools .on {
  color: #2386f3;
}

/* workspace switcher */
.workspace-menu {
  position: absolute;
  right: 2px;
  bottom: 24px;
  width: 144px;
  padding-bottom: 1px;
  background: #505050;
  border: 1px solid #787878;
}

.workspace-menu button {
  position: relative;
  justify-content: flex-start;
  width: 100%;
  height: 20px;
  padding: 0 0 2px 16px;
  color: #fff;
  font-weight: bold;
}

.workspace-menu .check {
  position: absolute;
  left: 4px;
  width: 9px;
  height: 9px;
}

.workspace-menu .hover {
  background: linear-gradient(#6e6e6e, #585858);
  border: 1px solid #7a7a7a;
}

.workspace-menu hr {
  margin: 1px 0;
  border: 0;
  border-top: 1px solid #888;
}

/* overlays */
.video-brand {
  position: absolute;
  left: 50px;
  top: 44px;
  display: flex;
  align-items: center;
  height: 46px;
  color: #fff;
  font-weight: bold;
  font-style: italic;
  line-height: 46px;
  filter: drop-shadow(1px 0 #333) drop-shadow(-1px 0 #333) drop-shadow(0 1px #333) drop-shadow(0 -1px #333) drop-shadow(0 1px 1px #222);
}

.video-brand .cjk {
  font-size: 34px;
}

.video-brand .latin {
  font-family: Lato, sans-serif;
  font-size: 36px;
}

.video-brand svg {
  width: 24px;
  height: 38px;
}

.site-brand {
  position: absolute;
  right: 71px;
  bottom: 18px;
  display: flex;
  align-items: center;
  gap: 17px;
  width: 235px;
  height: 115px;
  padding-left: 13px;
  background: #212e56;
  color: #c9ccd6;
}

.site-brand svg {
  width: 48px;
  height: 50px;
}

.site-name {
  font-size: 36px;
  font-weight: bold;
  line-height: 36px;
}

.site-url {
  font-family: "DejaVu Sans", sans-serif;
  font-size: 17px;
  line-height: 20px;
}
```
